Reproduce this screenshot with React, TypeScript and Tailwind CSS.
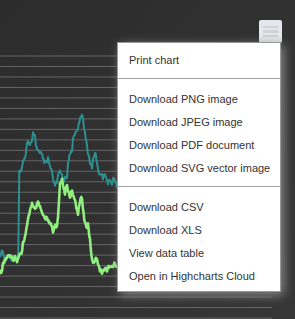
import React from "react";

type Pt = [number, number];

// series traced from the chart (page coordinates)
const tealPoints: Pt[] = [
  [0, 257], [2, 250], [5, 261], [8, 254], [12, 261], [17, 257], [18.3, 256],
  [19.3, 172], [21, 170], [22, 167], [23, 162], [25, 158], [27, 143], [28, 140],
  [30, 145], [32, 140], [33, 133], [35, 137], [36, 147], [38, 150], [40, 152],
  [42, 155], [43, 160], [45, 163], [47, 162], [48, 158], [50, 167], [52, 172],
  [53, 180], [55, 185], [57, 182], [58, 175], [60, 172], [62, 175], [63, 182],
  [65, 178], [67, 177], [68, 162], [70, 155], [72, 150], [73, 140], [75, 133],
  [77, 130], [78, 127], [80, 120], [82, 115], [83, 118], [84, 127], [85, 133],
  [87, 145], [88, 153], [90, 163], [92, 167], [93, 160], [95, 152], [97, 162],
  [98, 170], [100, 175], [102, 173], [103, 178], [105, 173], [107, 180],
  [108, 183], [110, 180], [112, 183], [113, 178], [115, 180], [117, 187], [125, 190],
];

const greenPoints: Pt[] = [
  [0, 273], [2, 270], [3, 263], [5, 260], [7, 257], [8, 255], [10, 257], [12, 258],
  [13, 260], [15, 257], [17, 262], [18, 257], [20, 253], [22, 252], [23, 243],
  [25, 237], [27, 227], [28, 220], [30, 210], [32, 203], [33, 207], [35, 210],
  [37, 205], [38, 203], [40, 207], [42, 213], [43, 215], [45, 220], [47, 217],
  [48, 222], [50, 223], [52, 228], [53, 233], [55, 225], [57, 227], [58, 217],
  [59, 200], [60, 182], [62, 180], [63, 187], [65, 193], [67, 185], [68, 190],
  [70, 197], [72, 190], [73, 197], [75, 200], [77, 210], [78, 213], [80, 200],
  [82, 198], [83, 210], [85, 223], [87, 227], [88, 225], [90, 240], [92, 260],
  [93, 263], [95, 260], [97, 258], [98, 263], [100, 270], [102, 273], [103, 270],
  [105, 268], [107, 270], [108, 267], [110, 268], [112, 265], [113, 267],
  [115, 263], [117, 267], [125, 265],
];

function jagged(points: Pt[], amp: number, seed: number) {
  const out: string[] = [];
  let n = 0;
  for (let k = 0; k < points.length - 1; k++) {
    const [x1, y1] = points[k];
    const [x2, y2] = points[k + 1];
    const steps = Math.max(1, Math.round((x2 - x1) / 0.8));
    for (let s = 0; s < steps; s++) {
      const t = s / steps;
      const r = Math.sin((n + seed) * 12.9898) * 43758.5453;
      const j = (r - Math.floor(r)) * 2 - 1;
      n++;
      const x = x1 + (x2 - x1) * t;
      const y = y1 + (y2 - y1) * t + j * amp;
      out.push(`${x.toFixed(1)},${y.toFixed(1)}`);
    }
  }
  const last = points[points.length - 1];
  out.push(`${last[0]},${last[1]}`);
  return "M" + out.join(" L");
}

const gridLines = Array.from({ length: 26 }, (_, k) => 56 + k * 10.48);

const menuGroups = [
  ["Print chart"],
  ["Download PNG image", "Download JPEG image", "Download PDF document", "Download SVG vector image"],
  ["Download CSV", "Download XLS", "View data table", "Open in Highcharts Cloud"],
];

const App = () => {
  return (
    <div className="relative w-[295px] h-[319px] overflow-hidden bg-linear-to-br from-[#2c2c2d] to-[#363637] font-['Liberation_Sans',Arial,sans-serif]">
      <svg width="295" height="319" className="absolute inset-0">
        {gridLines.map((y) => (
          <line key={y} x1="0" x2="272" y1={y} y2={y} stroke="#666668" strokeWidth="1" />
        ))}
        <path d={jagged(tealPoints, 1.8, 3)} fill="none" stroke="#2b908f" strokeWidth="2" strokeLinejoin="round" />
        <path d={jagged(greenPoints, 1.8, 11)} fill="none" stroke="#90ee7e" strokeWidth="2.6" strokeLinejoin="round" />
      </svg>

      <div className="absolute left-[259px] top-[20px] w-[23px] h-[23px] rounded-[2px] bg-[#e5e7ee] flex flex-col items-center justify-center gap-[2px]">
        <div className="w-[15px] h-[2.5px] bg-[#d3d3d3]" />
        <div className="w-[15px] h-[2.5px] bg-[#d3d3d3]" />
        <div className="w-[15px] h-[2.5px] bg-[#d3d3d3]" />
      </div>

      <div className="absolute left-[117px] top-[42px] w-[164px] bg-white border border-[#999999] pt-[6px] pb-[3px] shadow-[3px_3px_10px_#888888]">
        {menuGroups.map((group, gi) => (
          <div key={gi}>
            {gi > 0 && <div className="mt-[6px] mb-[9px] border-t border-[#a0a0a0]" />}
            {group.map((item) => (
              <div key={item} className="h-[23px] px-[11px] flex items-center text-[11px] text-[#333333] whitespace-nowrap">
                {item}
              </div>
            ))}
          </div>
        ))}
      </div>
    </div>
  );
};

export default App;
